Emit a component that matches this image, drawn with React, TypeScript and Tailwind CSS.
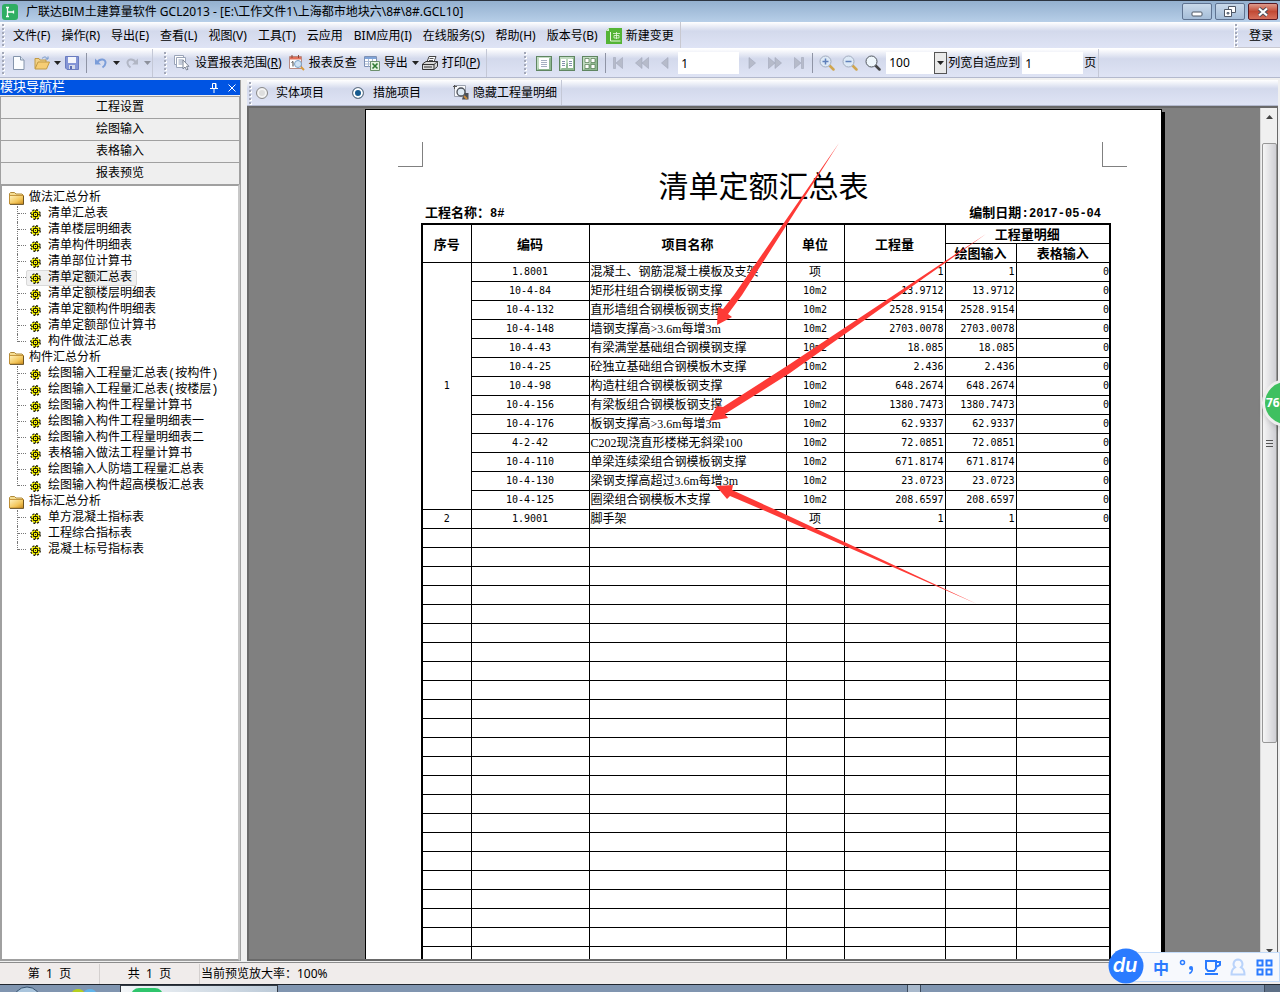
import { ReactNode } from "react";

const menus = [
  "文件(F)",
  "操作(R)",
  "导出(E)",
  "查看(L)",
  "视图(V)",
  "工具(T)",
  "云应用",
  "BIM应用(I)",
  "在线服务(S)",
  "帮助(H)",
  "版本号(B)",
];

const navTabs = ["工程设置", "绘图输入", "表格输入", "报表预览"];

const tree = [
  {
    title: "做法汇总分析",
    items: [
      "清单汇总表",
      "清单楼层明细表",
      "清单构件明细表",
      "清单部位计算书",
      "清单定额汇总表",
      "清单定额楼层明细表",
      "清单定额构件明细表",
      "清单定额部位计算书",
      "构件做法汇总表",
    ],
  },
  {
    title: "构件汇总分析",
    items: [
      "绘图输入工程量汇总表(按构件)",
      "绘图输入工程量汇总表(按楼层)",
      "绘图输入构件工程量计算书",
      "绘图输入构件工程量明细表一",
      "绘图输入构件工程量明细表二",
      "表格输入做法工程量计算书",
      "绘图输入人防墙工程量汇总表",
      "绘图输入构件超高模板汇总表",
    ],
  },
  {
    title: "指标汇总分析",
    items: ["单方混凝土指标表", "工程综合指标表", "混凝土标号指标表"],
  },
];

const rows = [
  ["1.8001", "混凝土、钢筋混凝土模板及支架", "项", "1"],
  ["10-4-84", "矩形柱组合钢模板钢支撑", "10m2", "13.9712"],
  ["10-4-132", "直形墙组合钢模板钢支撑", "10m2", "2528.9154"],
  ["10-4-148", "墙钢支撑高>3.6m每增3m", "10m2", "2703.0078"],
  ["10-4-43", "有梁满堂基础组合钢模钢支撑", "10m2", "18.085"],
  ["10-4-25", "砼独立基础组合钢模板木支撑", "10m2", "2.436"],
  ["10-4-98", "构造柱组合钢模板钢支撑", "10m2", "648.2674"],
  ["10-4-156", "有梁板组合钢模板钢支撑", "10m2", "1380.7473"],
  ["10-4-176", "板钢支撑高>3.6m每增3m", "10m2", "62.9337"],
  ["4-2-42", "C202现浇直形楼梯无斜梁100", "10m2", "72.0851"],
  ["10-4-110", "单梁连续梁组合钢模板钢支撑", "10m2", "671.8174"],
  ["10-4-130", "梁钢支撑高超过3.6m每增3m", "10m2", "23.0723"],
  ["10-4-125", "圈梁组合钢模板木支撑", "10m2", "208.6597"],
  ["1.9001", "脚手架", "项", "1"],
];

const EMPTY_ROWS = 24;

const num = "font-['DejaVu_Sans_Mono','Noto_Sans_CJK_SC',monospace] text-[10px]";
const cell = "h-[19px] border border-black p-0 leading-[18px]";
const bar = "bg-linear-to-b from-white via-[#d3d9ec] via-35% to-[#dfe4f5]";

function Grip() {
  return (
    <svg width="4" height="24" className="shrink-0" aria-hidden="true">
      {[1, 5, 9, 13, 17, 21].map((y) => (
        <g key={y}>
          <rect x="1" y={y + 1} width="2" height="2" fill="#fff" />
          <rect x="0" y={y} width="2" height="2" fill="#a3a8b8" />
        </g>
      ))}
    </svg>
  );
}

function Caret({ dim }: { dim?: boolean }) {
  return (
    <svg width="7" height="4" className="shrink-0" aria-hidden="true">
      <path d="M0 0h7L3.5 4z" fill={dim ? "#8d919c" : "#222"} />
    </svg>
  );
}

function Sep() {
  return <span className="h-5 w-px shrink-0 bg-[#8f94a5]" />;
}

function ToolButton({ label, children, className = "" }: { label: string; children: ReactNode; className?: string }) {
  return (
    <button type="button" aria-label={label} className={`flex shrink-0 items-center ${className}`}>
      {children}
    </button>
  );
}

function Folder() {
  return (
    <svg width="15" height="13" viewBox="0 0 15 13" aria-hidden="true">
      <defs>
        <linearGradient id="folder" x1="0" y1="0" x2="1" y2="1">
          <stop offset="0" stopColor="#fff3c0" />
          <stop offset="0.6" stopColor="#f3c65a" />
          <stop offset="1" stopColor="#c98a1c" />
        </linearGradient>
      </defs>
      <path d="M.5 11.5v-10l1-1h4l1.500 1.500h6l1 1v8.500z" fill="#f5dd92" stroke="#b08a3a" />
      <path d="M.5 3.500h14v8.500H.5z" fill="url(#folder)" stroke="#b98427" strokeWidth=".8" />
      <path d="M1 12.500h13.500V4" fill="none" stroke="#5b451a" strokeWidth=".8" />
    </svg>
  );
}

function Gear() {
  return (
    <svg width="11" height="11" viewBox="0 0 11 11" aria-hidden="true">
      <circle cx="5.500" cy="5.500" r="4.500" fill="#f2ee00" />
      <circle cx="5.500" cy="5.500" r="4.800" fill="none" stroke="#1c1c06" strokeWidth="1.300" strokeDasharray="2 1.770" />
      <path d="M5.500 1v2M5.500 8v2M1 5.500h2M8 5.500h2" stroke="#1c1c06" strokeWidth=".8" />
      <path d="M3.500 3.500h4v4h-4z" fill="#f2ee00" stroke="#1c1c06" />
      <path d="M5 5h1v1H5z" fill="#1c1c06" />
    </svg>
  );
}

function ViewIcon({ kind }: { kind: 1 | 2 | 4 }) {
  return (
    <svg width="16" height="15" viewBox="0 0 16 15" aria-hidden="true">
      <rect x=".5" y=".5" width="15" height="14" fill="#8fb891" stroke="#5f8561" />
      <path d="M1 1h14L1 14z" fill="#c2dcc2" />
      {kind === 1 && (
        <>
          <path d="M3 2h10v11H3z" fill="#fff" />
          <path d="M5 4.500h6M5 6.500h6M5 8.500h6M5 10.500h6" stroke="#a5afc0" />
        </>
      )}
      {kind === 2 && (
        <>
          <path d="M2 3h5v9H2zM9 3h5v9H9z" fill="#fff" />
          <path d="M3 5.500h3M3 7.500h3M3 9.500h3M10 5.500h3M10 7.500h3M10 9.500h3" stroke="#8391ab" />
        </>
      )}
      {kind === 4 && <path d="M3 2.500h4v4H3zM9 2.500h4v4H9zM3 8.500h4v4H3zM9 8.500h4v4H9z" fill="#fff" stroke="#52784f" strokeWidth=".7" />}
    </svg>
  );
}

function Lens({ sign, dark }: { sign?: string; dark?: boolean }) {
  return (
    <svg width="16" height="16" viewBox="0 0 16 16" aria-hidden="true">
      <path d="m10.500 10.500 4 4" stroke={dark ? "#444" : "#d0a650"} strokeWidth="2.500" strokeLinecap="round" />
      <circle cx="6.500" cy="6.500" r="5.500" fill={dark ? "#eef6fb" : "#dde9f6"} stroke={dark ? "#50565e" : "#a3adbf"} />
      {sign && <path d={sign} stroke="#5f80ba" strokeWidth="1.500" />}
    </svg>
  );
}

function Nav({ d, label, w = 14 }: { d: string; label: string; w?: number }) {
  return (
    <ToolButton label={label}>
      <svg width={w} height="12" viewBox={`0 0 ${w} 12`} aria-hidden="true">
        <path d={d} fill="#b6bbca" stroke="#a2a8ba" strokeWidth=".6" />
      </svg>
    </ToolButton>
  );
}

function TitleBar() {
  return (
    <header className="flex h-[22px] shrink-0 items-center border-t border-[#2c3440] bg-linear-to-b from-[#94b0cf] to-[#b7cfe8] pl-0.5 text-xs">
      <svg width="16" height="16" viewBox="0 0 16 16" aria-hidden="true">
        <rect width="16" height="16" rx="3" fill="#2fae63" />
        <path d="M5.500 3.500v9M5.500 8h6M4 3.500h3M4 12.500h3M11.500 6.500v3" stroke="#fff" strokeWidth="1.300" fill="none" />
      </svg>
      <h1 className="ml-2 whitespace-nowrap">广联达BIM土建算量软件 GCL2013 - [E:\工作文件1\上海都市地块六\8#\8#.GCL10]</h1>
      <div className="ml-auto flex gap-[3px] pr-0.5">
        <button type="button" aria-label="最小化" className="flex h-[17px] w-[30px] items-center justify-center rounded-xs border border-[#5f7391] bg-linear-to-b from-[#c9d9ea] to-[#a5bdd8]">
          <svg width="12" height="11" aria-hidden="true">
            <rect x="1" y="6" width="10" height="4" rx="1" fill="#fff" stroke="#4f5866" />
          </svg>
        </button>
        <button type="button" aria-label="还原" className="flex h-[17px] w-[30px] items-center justify-center rounded-xs border border-[#5f7391] bg-linear-to-b from-[#c9d9ea] to-[#a5bdd8]">
          <svg width="12" height="11" aria-hidden="true">
            <path d="M4.500.500h7v6h-7z" fill="#fff" stroke="#4f5866" />
            <path d="M.5 3.500h7v7h-7z" fill="#fff" stroke="#4f5866" />
            <path d="M3 6.500h2v1.500H3z" fill="#8ba3c0" stroke="#4f5866" strokeWidth=".8" />
          </svg>
        </button>
        <button type="button" aria-label="关闭" className="flex h-[17px] w-[30px] items-center justify-center rounded-xs border border-[#591822] bg-linear-to-b from-[#dd9a8c] via-[#c24a35] to-[#d6705c]">
          <svg width="12" height="10" aria-hidden="true">
            <path d="m2 1.500 8 7m0-7-8 7" stroke="#4a4f5c" strokeWidth="4" />
            <path d="m2 1.500 8 7m0-7-8 7" stroke="#fff" strokeWidth="2.200" />
          </svg>
        </button>
      </div>
    </header>
  );
}

function MenuBar() {
  return (
    <nav className={`flex h-[27px] shrink-0 items-center border-b border-white pl-0.5 text-xs ${bar}`}>
      <Grip />
      <div className="flex items-center gap-[11px] pt-0.5 pl-[7px]">
        {menus.map((m) => (
          <button key={m} type="button" className="whitespace-nowrap">
            {m}
          </button>
        ))}
      </div>
      <button type="button" className="ml-2 flex h-[26px] items-center gap-1 border-r border-[#c8c8d0] pt-0.5 pr-1.5 whitespace-nowrap">
        <svg width="16" height="16" viewBox="0 0 16 16" aria-hidden="true">
          <path d="M3 0h13v16H0V3z" fill="#54b435" />
          <path d="M3 0v3H0z" fill="#d5efc8" />
          <path d="M4.500 4v9h10" stroke="#e9f8e0" fill="none" />
          <path d="M7 5.500h7M10.500 4v7M8 7.500h5v2.500H8z" stroke="#e9f8e0" strokeWidth=".8" fill="none" />
        </svg>
        新建变更
      </button>
      <div className="ml-auto flex h-[26px] items-center gap-[10px] border-b border-l border-l-white border-b-[#c8c8d0] pr-[7px]">
        <Grip />
        <button type="button" className="pt-0.5">
          登录
        </button>
      </div>
    </nav>
  );
}

function ToolBar() {
  return (
    <div className={`flex h-[29px] shrink-0 items-center border-b border-[#b3b9cd] pl-0.5 text-xs whitespace-nowrap ${bar}`}>
      <Grip />
      <ToolButton label="新建" className="ml-[7px]">
        <svg width="12" height="14" viewBox="0 0 12 14" aria-hidden="true">
          <path d="M.5.500h7l3.500 3.500v9.500H.5z" fill="#fbfdff" stroke="#8494ab" />
          <path d="M7.500.500V4H11" fill="#dbe5f1" stroke="#8494ab" />
        </svg>
      </ToolButton>
      <ToolButton label="打开" className="ml-[9px] gap-1">
        <svg width="16" height="14" viewBox="0 0 16 14" aria-hidden="true">
          <path d="M1 12.500V2.500h4l1 1.500h6v2" fill="#f2d288" stroke="#c19a45" />
          <path d="M1 13 4 6h11.500l-3 7z" fill="#f6cd74" stroke="#c19a45" />
          <path d="M8 2.500c2-2 4-2 5 0m1-2v2.500h-2.500" fill="none" stroke="#6f94c8" />
        </svg>
        <Caret />
      </ToolButton>
      <ToolButton label="保存" className="mr-[7px] ml-1">
        <svg width="14" height="14" viewBox="0 0 14 14" aria-hidden="true">
          <path d="M.5.500h13v13H2L.5 12z" fill="#8495d6" stroke="#6a7cc0" />
          <path d="M3 1h8v6H3z" fill="#f4f6fc" />
          <path d="M4 9h6v4H4z" fill="#d4dae9" />
          <path d="M5 10h2v3H5z" fill="#5a6db4" />
        </svg>
      </ToolButton>
      <Sep />
      <ToolButton label="撤销" className="ml-[8px] gap-[6px]">
        <svg width="12" height="12" viewBox="0 0 12 12" aria-hidden="true">
          <path d="M2 5.500C5 1 11 2 10.500 6c-.2 2-1.500 3.500-3 4.500" fill="none" stroke="#7b9dd9" strokeWidth="2" />
          <path d="M0 1.500V7.500h6z" fill="#7b9dd9" />
        </svg>
        <Caret />
      </ToolButton>
      <ToolButton label="重做" className="ml-[6px] gap-[6px]">
        <svg width="12" height="12" viewBox="0 0 12 12" aria-hidden="true">
          <path d="M10 5.500C7 1 1 2 1.500 6c.2 2 1.500 3.500 3 4.500" fill="none" stroke="#b1b6c4" strokeWidth="2" />
          <path d="M12 1.500V7.500H6z" fill="#b1b6c4" />
        </svg>
        <Caret dim />
      </ToolButton>
      <span className="ml-px h-7 w-3 shrink-0 border-l border-[#c4c8d6]" />
      <Grip />
      <ToolButton label="设置报表范围" className="ml-[6px] gap-[5px]">
        <svg width="16" height="16" viewBox="0 0 16 16" aria-hidden="true">
          <path d="M.5.500h9v9h-9z" fill="#fff" stroke="#9aa4b8" />
          <path d="M2.500 2.500h9v10h-9z" fill="#fff" stroke="#9aa4b8" />
          <path d="M4.500 5h5M4.500 7h5M4.500 9h4" stroke="#8b9ab5" />
          <path d="M9 5v9l2-2 1.500 3 1.500-.7-1.500-3H15z" fill="#fff" stroke="#7d8595" />
        </svg>
        <span>
          设置报表范围(<u>R</u>)
        </span>
      </ToolButton>
      <ToolButton label="报表反查" className="ml-[7px] gap-1">
        <svg width="16" height="16" viewBox="0 0 16 16" aria-hidden="true">
          <path d="M.5 1.500h12v12H.5z" fill="#fff" stroke="#b98b83" />
          <path d="M1 2h11v2.500H1z" fill="#e0705a" />
          <path d="M3 0v3M9.500 0v3" stroke="#8b4437" />
          <path d="M2.500 7.500 4 6.500v5" fill="none" stroke="#444" />
          <circle cx="9" cy="9" r="3.500" fill="#cfe3f5" stroke="#7aa0c5" />
          <path d="m12 12 3 3" stroke="#d79a3b" strokeWidth="2" />
        </svg>
        报表反查
      </ToolButton>
      <ToolButton label="导出" className="ml-[7px] gap-1">
        <svg width="16" height="16" viewBox="0 0 16 16" aria-hidden="true">
          <path d="M.5 1.500h12v10H.5z" fill="#fff" stroke="#7d90b4" />
          <path d="M1 2h11v2H1z" fill="#7fa3d8" />
          <path d="M1 6.500h11M1 9h11M4.500 4v7.500M8.500 4v7.500" stroke="#a9b9d3" />
          <path d="M6.500 6.500h9v9h-9z" fill="#e2f1df" stroke="#6b8f6c" />
          <path d="m8.500 8.500 5 5m0-5-5 5" stroke="#2f7a33" strokeWidth="1.600" />
        </svg>
        导出
        <Caret />
      </ToolButton>
      <ToolButton label="打印" className="ml-[3px] gap-1">
        <svg width="16" height="15" viewBox="0 0 16 15" aria-hidden="true">
          <path d="M5 6 7 .5h7L12 6" fill="#fff" stroke="#444" />
          <path d="M7.500 2.500h4M7 4.500h4" stroke="#555" />
          <path d="M.5 8 4 5.500h11.500v5L12 13.500H.5z" fill="#d8d8d8" stroke="#333" />
          <path d="M.5 8.500H12v5M12 8.500l3.500-3M2 11h8" fill="none" stroke="#333" />
        </svg>
        <span>
          打印(<u>P</u>)
        </span>
      </ToolButton>
      <span className="ml-[6px] h-7 w-[38px] shrink-0 border-l border-[#c4c8d6]" />
      <Grip />
      <div className="ml-[8px] mr-[7px] flex gap-[7px]">
        <ToolButton label="单页">
          <ViewIcon kind={1} />
        </ToolButton>
        <ToolButton label="双页">
          <ViewIcon kind={2} />
        </ToolButton>
        <ToolButton label="四页">
          <ViewIcon kind={4} />
        </ToolButton>
      </div>
      <Sep />
      <div className="ml-[7px] flex items-center gap-3">
        <Nav label="首页" w={10} d="M.5.500h2v11h-2zM9.500.500v11L3 6z" />
        <Nav label="快退" d="M7 .5v11L.5 6zM13.500.500v11L7 6z" />
        <Nav label="上一页" w={8} d="M7 .5v11L.5 6z" />
      </div>
      <input aria-label="页码" defaultValue="1" className="mr-[9px] ml-[9px] h-[22px] w-[61px] bg-white px-[3px]" />
      <div className="mr-2 flex items-center gap-3">
        <Nav label="下一页" w={8} d="M1 .5v11L7.500 6z" />
        <Nav label="快进" d="M.5.500v11L7 6zM7 .5v11L13.500 6z" />
        <Nav label="末页" w={10} d="M.5.500v11L7 6zM7.500.500h2v11h-2z" />
      </div>
      <Sep />
      <div className="ml-[6px] flex gap-[7px]">
        <ToolButton label="放大">
          <Lens sign="M3.500 6.500h6M6.500 3.500v6" />
        </ToolButton>
        <ToolButton label="缩小">
          <Lens sign="M3.500 6.500h6" />
        </ToolButton>
        <ToolButton label="查看">
          <Lens dark />
        </ToolButton>
      </div>
      <div className="relative ml-[5px] shrink-0">
        <select aria-label="缩放" defaultValue="100" className="block h-[22px] w-[61px] appearance-none bg-white px-[3px]">
          <option>100</option>
        </select>
        <span className="pointer-events-none absolute inset-y-0 right-0 flex w-[13px] items-center justify-center border border-[#555] bg-[#e9e9e9]">
          <Caret />
        </span>
      </div>
      <label className="flex items-center gap-[2px] pl-px">
        列宽自适应到
        <input defaultValue="1" className="h-[22px] w-[61px] bg-white px-[3px]" />
      </label>
      <span className="flex h-7 items-center border-r border-[#c4c8d6] pl-px pr-0.5">页</span>
    </div>
  );
}

function Sidebar() {
  return (
    <aside className="flex w-[241px] shrink-0 flex-col border-r border-[#a0a0a0] bg-[#f0f0f0] font-['Liberation_Mono','Noto_Sans_CJK_SC',monospace] text-xs">
      <div className="flex h-[15px] shrink-0 items-center bg-[#0054e3] pr-1 text-white">
        <h2 className="text-[13px] leading-[15px]">模块导航栏</h2>
        <button type="button" aria-label="固定" className="ml-auto">
          <svg width="8" height="10" viewBox="0 0 8 10" fill="none" stroke="#fff" aria-hidden="true">
            <path d="M2.500.500h3.500v5M2.500.500v5M5.500.500v5M0 5.500h8M4 6v4" />
          </svg>
        </button>
        <button type="button" aria-label="关闭导航栏" className="ml-[10px]">
          <svg width="8" height="8" viewBox="0 0 8 8" stroke="#fff" aria-hidden="true">
            <path d="m.5.500 7 7m0-7-7 7" />
          </svg>
        </button>
      </div>
      <div className="mt-px flex shrink-0 flex-col">
        {navTabs.map((t) => (
          <button key={t} type="button" className="h-[22px] border-x border-t border-[#a0a0a0] bg-[#efefef] leading-[22px]">
            {t}
          </button>
        ))}
      </div>
      <div className="min-h-0 flex-1 overflow-hidden border-2 border-[#a0a0a0] border-r-[#c8c8c8] bg-white pt-1">
        <ul>
          {tree.map((g) => (
            <li key={g.title}>
              <div className="flex h-4 items-center gap-[5px] pl-[7px] leading-4">
                <Folder />
                {g.title}
              </div>
              <ul>
                {g.items.map((it, i) => (
                  <li key={it} className="flex h-4 pl-[15px] leading-4 whitespace-nowrap">
                    <span className={`w-0 border-l border-dotted border-[#777] ${i === g.items.length - 1 ? "h-2" : "h-4"}`} />
                    <span className="h-2 w-2 border-b border-dotted border-[#777]" />
                    <button
                      type="button"
                      className={`flex h-4 items-center gap-[7px] rounded-xs border pr-1 pl-[3px] leading-4 ${
                        it === "清单定额汇总表" ? "border-[#d9d9d9] bg-[#f0f0f0]" : "border-transparent"
                      }`}
                    >
                      <Gear />
                      {it}
                    </button>
                  </li>
                ))}
              </ul>
            </li>
          ))}
        </ul>
      </div>
    </aside>
  );
}

function FilterBar() {
  return (
    <div className={`flex h-[26px] shrink-0 items-center border-b border-[#b3b9cd] pl-0.5 text-xs whitespace-nowrap ${bar}`}>
      <Grip />
      <label className="ml-[3px] flex items-center gap-2">
        <input type="radio" name="kind" className="size-3 appearance-none rounded-full border border-[#8a8a8a] bg-[#dedede] inset-ring-2 inset-ring-[#f4f4f4]" />
        实体项目
      </label>
      <label className="ml-7 flex items-center gap-[9px]">
        <input
          type="radio"
          name="kind"
          defaultChecked
          className="size-3 appearance-none rounded-full border border-[#6c7684] bg-[#155a8f] inset-ring-2 inset-ring-white"
        />
        措施项目
      </label>
      <button type="button" className="ml-8 flex h-[25px] items-center gap-1 border-r border-[#c4c8d6] pr-1">
        <svg width="16" height="15" viewBox="0 0 16 15" aria-hidden="true">
          <path d="M1.500.500h11v11h-11z" fill="#f7f8fb" stroke="#9aa0ae" />
          <path d="M0 1.500h4M1.500 0v4" stroke="#555" />
          <path d="M11 8h4.500v6.500H9z" fill="#4a4f58" />
          <circle cx="8" cy="7" r="4" fill="#dfeaf5" stroke="#4a4f58" strokeWidth="1.300" />
          <path d="m11 11 3 3" stroke="#c78a3c" strokeWidth="2" />
        </svg>
        隐藏工程量明细
      </button>
    </div>
  );
}

function ReportTable() {
  return (
    <table className="ml-[55px] w-[688px] table-fixed border-collapse border-2 border-black text-xs">
      <colgroup>
        <col className="w-[49px]" />
        <col className="w-[118px]" />
        <col className="w-[197px]" />
        <col className="w-[58px]" />
        <col className="w-[101px]" />
        <col className="w-[71px]" />
        <col className="w-[94px]" />
      </colgroup>
      <thead className="text-[13px]">
        <tr>
          {["序号", "编码", "项目名称", "单位", "工程量"].map((h) => (
            <th key={h} rowSpan={2} className={cell}>
              {h}
            </th>
          ))}
          <th colSpan={2} className={cell}>
            工程量明细
          </th>
        </tr>
        <tr>
          <th className={cell}>绘图输入</th>
          <th className={cell}>表格输入</th>
        </tr>
      </thead>
      <tbody>
        {rows.map(([code, name, unit, qty], i) => (
          <tr key={code}>
            {i === 0 && (
              <td rowSpan={13} className={`${cell} ${num} text-center`}>
                1
              </td>
            )}
            {i === 13 && <td className={`${cell} ${num} text-center`}>2</td>}
            <td className={`${cell} ${num} text-center`}>{code}</td>
            <td className={`${cell} overflow-hidden pl-px font-['Liberation_Serif','Noto_Sans_CJK_SC',sans-serif] whitespace-nowrap`}>{name}</td>
            <td className={`${cell} text-center ${unit === "项" ? "" : num}`}>{unit}</td>
            <td className={`${cell} ${num} pr-px text-right`}>{qty}</td>
            <td className={`${cell} ${num} pr-px text-right`}>{qty}</td>
            <td className={`${cell} ${num} text-right`}>0</td>
          </tr>
        ))}
        {Array.from({ length: EMPTY_ROWS }, (_, i) => (
          <tr key={i}>
            {Array.from({ length: 7 }, (_, j) => (
              <td key={j} className={cell} />
            ))}
          </tr>
        ))}
      </tbody>
    </table>
  );
}

function Report() {
  return (
    <div className="flex min-w-0 flex-1 items-start justify-center overflow-hidden pt-px pl-[18px]">
      <article className="relative h-[1120px] w-[797px] shrink-0 border border-black bg-white shadow-[3px_3px_0_0_#000]">
        <div className="flex justify-between pt-8 pr-[34px] pl-8">
          <span className="size-[25px] border-r border-b border-[#808080]" />
          <span className="size-[25px] border-b border-l border-[#808080]" />
        </div>
        <h2 className="text-center text-[30px] leading-[38px]">清单定额汇总表</h2>
        <div className="flex h-[18px] justify-between pr-[60px] pl-[59px] font-['Liberation_Mono','Noto_Sans_CJK_SC',monospace] text-[13px] leading-[18px] font-bold">
          <span>
            工程名称：<span className="text-xs">8#</span>
          </span>
          <span>
            编制日期:<span className="text-xs">2017-05-04</span>
          </span>
        </div>
        <ReportTable />
        <svg className="pointer-events-none absolute top-0 left-0" width="795" height="600" viewBox="366 110 795 600" fill="#fe3a36" aria-hidden="true">
          <path d="M839 143 742 295l-14 19 4 3-15 8 1-18 5 2 11-14z" />
          <path d="M986 234 790 373l-65 41 3 4-19 3 8-15 6 1 67-43z" />
          <path d="M977 604 776 510l-44-20 1-5-17 1 11 13 3-3 33 14z" />
        </svg>
      </article>
    </div>
  );
}

function ScrollBar() {
  return (
    <div className="flex w-[17px] shrink-0 flex-col items-center border-l border-[#d8d8d8] bg-[#f0f0f0]" aria-hidden="true">
      <span className="flex h-[17px] items-center">
        <svg width="7" height="4">
          <path d="M0 4h7L3.500 0z" fill="#444" />
        </svg>
      </span>
      <span className="h-[18px] shrink-0" />
      <span className="flex w-[15px] flex-[602] flex-col items-center justify-center gap-0.5 rounded-xs border border-[#979797] bg-linear-to-r from-[#f6f6f6] to-[#cfcfd4]">
        <i className="h-px w-[7px] bg-[#555]" />
        <i className="h-px w-[7px] bg-[#555]" />
        <i className="h-px w-[7px] bg-[#555]" />
      </span>
      <span className="flex-[200]" />
      <span className="flex h-[17px] items-center">
        <svg width="7" height="4">
          <path d="M0 0h7L3.500 4z" fill="#444" />
        </svg>
      </span>
    </div>
  );
}

function StatusBar() {
  return (
    <footer className="flex h-[22px] shrink-0 items-center border-t border-[#8c8c8c] bg-[#f0eceb] text-xs leading-5">
      <span className="w-[100px] border-r border-[#d4d0cf] text-center">第&nbsp; 1 &nbsp;页</span>
      <span className="w-[100px] border-r border-[#d4d0cf] text-center">共&nbsp; 1 &nbsp;页</span>
      <span className="pl-px">当前预览放大率：100%</span>
    </footer>
  );
}

function TaskBar() {
  return (
    <div className="flex h-2 shrink-0 overflow-hidden border-t border-[#20262e] bg-[#8095b0]">
      <svg width="120" height="7" aria-hidden="true">
        <circle cx="27" cy="16" r="14" fill="#a9c4dc" stroke="#35506d" />
        <ellipse cx="78" cy="8" rx="6" ry="4" fill="#b5cf1e" />
        <ellipse cx="90" cy="8" rx="6" ry="4" fill="#5fb4ea" />
      </svg>
      <div className="w-[158px] border border-b-0 border-[#333a44] bg-linear-to-r from-[#f3f6f8] to-[#bccad8] pl-2.5">
        <div className="mt-0.5 h-2 w-8 rounded-t-lg bg-[#2fc56c]" />
      </div>
      <span className="ml-auto w-3.5 border-x border-[#3c4a5c] bg-[#a9b9cc]" />
      <span className="w-[343px]" />
      <span className="w-4 border-l border-[#3c4a5c] bg-[#5d6f86]" />
    </div>
  );
}

function InputMethodBar() {
  return (
    <div className="absolute right-0 bottom-[10px] flex h-[30px] w-[154px] items-center justify-between border border-[#c4dcfa] bg-[#f7f9fd] pr-[6px] pl-[26px]">
      <svg className="absolute -top-[5px] -left-[19px]" width="36" height="36" viewBox="0 0 36 36" aria-label="du" role="img">
        <circle cx="18" cy="18" r="17.500" fill="#2a7bff" />
        <text x="17" y="24" textAnchor="middle" fill="#fff" fontFamily="Inter, sans-serif" fontSize="20" fontStyle="italic" fontWeight="600">
          du
        </text>
      </svg>
      <button type="button" className="pt-0.5 text-base leading-4 font-bold text-[#2a7bff]">
        中
      </button>
      <svg width="16" height="16" viewBox="0 0 16 16" fill="none" stroke="#2a7bff" strokeWidth="1.500" aria-hidden="true">
        <circle cx="3.500" cy="3.500" r="2" />
        <circle cx="12" cy="9" r="2" fill="#2a7bff" stroke="none" />
        <path d="M13.300 9.500c.2 2-1 4-3 5" />
      </svg>
      <svg width="17" height="16" viewBox="0 0 17 16" fill="none" stroke="#2a7bff" strokeWidth="2" aria-hidden="true">
        <path d="M2 2h10v7.500L10 12H4L2 9.500zM12 3h4v3l-4 2M1 15h13" />
      </svg>
      <svg width="16" height="18" viewBox="0 0 16 18" fill="none" stroke="#b9d3fb" strokeWidth="2" aria-hidden="true">
        <path d="M8 1.500a4.500 4.500 0 0 1 3 7.800c2 1 3.500 3 3.500 7.200h-13c0-4.200 1.500-6.200 3.500-7.200a4.500 4.500 0 0 1 3-7.800z" />
      </svg>
      <svg width="17" height="17" viewBox="0 0 17 17" fill="none" stroke="#2a7bff" strokeWidth="2" aria-hidden="true">
        <path d="M1.500 1.500h5v5h-5zM10.500 1.500h5v5h-5zM1.500 10.500h5v5h-5zM10.500 10.500h5v5h-5z" />
      </svg>
    </div>
  );
}

export default function App() {
  return (
    <div className="relative flex h-screen flex-col overflow-hidden bg-[#f0f0f0] font-['Noto_Sans','Noto_Sans_CJK_SC',sans-serif] text-black">
      <TitleBar />
      <MenuBar />
      <ToolBar />
      <div className="flex min-h-0 flex-1 pt-0.5 pb-px">
        <Sidebar />
        <main className="mr-0.5 ml-[6px] flex min-w-0 flex-1 flex-col">
          <FilterBar />
          <div className="flex min-h-0 flex-1 border-2 border-r border-[#696969] bg-[#808080]">
            <Report />
            <ScrollBar />
          </div>
        </main>
      </div>
      <StatusBar />
      <TaskBar />
      <div className="absolute top-[379px] -right-[30px] flex size-12 items-center rounded-full border-3 border-[#eee] bg-[#3fc060] pl-px text-xs font-bold text-white shadow-md">
        76
      </div>
      <InputMethodBar />
    </div>
  );
}
